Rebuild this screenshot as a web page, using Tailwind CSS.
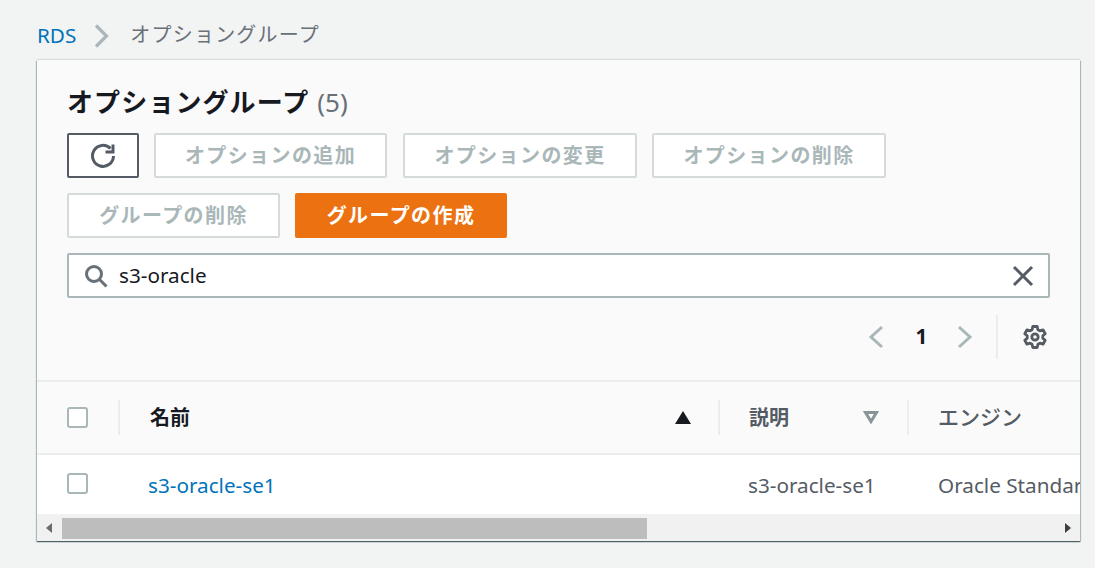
<!DOCTYPE html>
<html lang="ja">
<head>
  <meta charset="UTF-8" />
  <title>オプショングループ</title>
  <script src="https://cdn.jsdelivr.net/npm/@tailwindcss/browser@4"></script>
</head>
<body class="bg-[#f2f3f3] h-[568px] overflow-hidden font-['Noto_Sans','Noto_Sans_CJK_JP',sans-serif] text-[20.7px]">
  <!-- breadcrumb -->
  <nav class="h-[60px] pl-[37px] pt-[19px] flex items-start leading-[32px]">
    <a class="text-[#0073bb]">RDS</a>
    <svg class="w-[16px] h-[24px] ml-[18px] mt-[5px]" viewBox="0 0 16 24" fill="none" stroke="#aab7b8" stroke-width="3.200"><path d="M2 1.500l10.500 10.500L2 22.500" /></svg>
    <span class="ml-[20px] text-[#687078] text-[20px] tracking-[1.2px]">オプショングループ</span>
  </nav>

  <main class="ml-[37px] w-[1043px] h-[481px] bg-[#fafafa] shadow-[0_1px_1px_0_rgba(0,28,36,0.5),1px_1px_1px_0_rgba(0,28,36,0.2),-1px_1px_1px_0_rgba(0,28,36,0.2),0_-1px_1px_0_rgba(0,28,36,0.1)] overflow-hidden flex flex-col">
    <div class="h-[322px] shrink-0 px-[30px] pt-[22px] border-b-2 border-[#eaeded]">
      <h1 class="h-[40px] leading-[40px] text-[#16191f] text-[26px] font-bold tracking-[1.1px]">オプショングループ <span class="font-normal text-[#687078] text-[26px] tracking-normal">(5)</span></h1>

      <div class="mt-[11px] flex font-bold text-[20px]">
        <button class="w-[72px] h-[45px] bg-white border-2 border-[#545b64] rounded-[2px] flex items-center justify-center">
          <svg class="w-[26px] h-[26px]" viewBox="0 0 26 26" fill="none" stroke="#545b64" stroke-width="3"><path d="M20.500 5.500A10.500 10.500 0 1 0 23.500 13" /><path d="M23 1.500V9h-7.500" /></svg>
        </button>
        <button class="ml-[15px] w-[233px] h-[45px] bg-white border-2 border-[#d5dbdb] rounded-[2px] text-[#aab7b8] tracking-[1.4px]">オプションの追加</button>
        <button class="ml-[16px] w-[234px] h-[45px] bg-white border-2 border-[#d5dbdb] rounded-[2px] text-[#aab7b8] tracking-[1.4px]">オプションの変更</button>
        <button class="ml-[15px] w-[234px] h-[45px] bg-white border-2 border-[#d5dbdb] rounded-[2px] text-[#aab7b8] tracking-[1.4px]">オプションの削除</button>
      </div>
      <div class="mt-[15px] flex gap-[15px] font-bold text-[20px]">
        <button class="w-[213px] h-[45px] bg-white border-2 border-[#d5dbdb] rounded-[2px] text-[#aab7b8] tracking-[1.4px]">グループの削除</button>
        <button class="w-[212px] h-[45px] bg-[#ec7211] rounded-[2px] text-white tracking-[1.4px]">グループの作成</button>
      </div>

      <div class="mt-[15px] w-[983px] h-[45px] bg-white border-2 border-[#aab7b8] rounded-[2px] flex items-center pl-[15px] pr-[14px]">
        <svg class="w-[24px] h-[24px]" viewBox="0 0 24 24" fill="none" stroke="#687078" stroke-width="3"><circle cx="10" cy="10" r="7.500" /><path d="M15.500 15.500L22.500 22.500" /></svg>
        <span class="ml-[11px] flex-1 text-[#16191f]">s3-oracle</span>
        <svg class="w-[22px] h-[22px]" viewBox="0 0 22 22" fill="none" stroke="#545b64" stroke-width="3"><path d="M2 2l18 18M20 2L2 20" /></svg>
      </div>

      <div class="mt-[17px] w-[983px] h-[44px] flex items-center justify-end">
        <svg class="w-[16px] h-[24px]" viewBox="0 0 16 24" fill="none" stroke="#aab7b8" stroke-width="3"><path d="M14 2L3 12l11 10" /></svg>
        <span class="w-[73px] pl-[2px] text-center text-[#16191f] font-bold">1</span>
        <svg class="w-[16px] h-[24px]" viewBox="0 0 16 24" fill="none" stroke="#aab7b8" stroke-width="3"><path d="M2 2l11 10L2 22" /></svg>
        <div class="w-[2px] h-[44px] bg-[#eaeded] ml-[23px]"></div>
        <svg class="ml-[25px] mr-[3px] w-[24px] h-[24px]" viewBox="0 0 24 24" fill="none" stroke="#545b64" stroke-width="2.800" stroke-linejoin="round"><path d="M9.800 1.500h4.400l.7 3.200 2 1.100 3.100-1 2.200 3.800-2.400 2.200v2.400l2.400 2.200-2.200 3.800-3.100-1-2 1.100-.7 3.200H9.800l-.7-3.200-2-1.100-3.100 1-2.200-3.800 2.400-2.200v-2.400L1.800 8.600 4 4.800l3.100 1 2-1.100z" /><circle cx="12" cy="12" r="3.200" /></svg>
      </div>
    </div>

    <!-- table head -->
    <div class="h-[73px] shrink-0 flex items-center border-b-2 border-[#eaeded] font-bold text-[20px]">
      <span class="shrink-0 ml-[30px] w-[21px] h-[21px] bg-white border-2 border-[#aab7b8] rounded-[3px]"></span>
      <span class="shrink-0 ml-[30px] w-[2px] h-[35px] bg-[#eaeded]"></span>
      <span class="shrink-0 ml-[30px] w-[525px] text-[#16191f]">名前</span>
      <svg class="shrink-0 w-[16px] h-[13px]" viewBox="0 0 16 13" fill="#16191f"><path d="M8 0l8 13H0z" /></svg>
      <span class="shrink-0 ml-[27px] w-[2px] h-[35px] bg-[#eaeded]"></span>
      <span class="shrink-0 ml-[29px] w-[114px] text-[#545b64]">説明</span>
      <svg class="shrink-0 w-[16px] h-[13px]" viewBox="0 0 16 13" fill="none" stroke="#879596" stroke-width="3"><path d="M2.500 1.500h11L8 10.500z" /></svg>
      <span class="shrink-0 ml-[28px] w-[2px] h-[35px] bg-[#eaeded]"></span>
      <span class="shrink-0 ml-[29px] text-[#545b64] font-medium text-[21px]">エンジン</span>
    </div>

    <!-- table row -->
    <div class="h-[59px] shrink-0 bg-white flex items-center whitespace-nowrap overflow-hidden">
      <span class="shrink-0 ml-[30px] w-[21px] h-[21px] bg-white border-2 border-[#aab7b8] rounded-[3px] -mt-[2px]"></span>
      <a class="shrink-0 ml-[60px] w-[600px] text-[#0073bb] mt-[3px]">s3-oracle-se1</a>
      <span class="shrink-0 w-[190px] text-[#545b64] mt-[3px]">s3-oracle-se1</span>
      <span class="shrink-0 text-[#545b64] mt-[3px]">Oracle Standard Edition</span>
    </div>

    <!-- horizontal scrollbar -->
    <div class="h-[27px] shrink-0 bg-[#f1f1f1] flex items-center">
      <svg class="ml-[9px] w-[6px] h-[10px]" viewBox="0 0 6 10" fill="#6b6b6b"><path d="M6 0v10L0 5z" /></svg>
      <div class="ml-[10px] mt-[2px] w-[585px] h-[21px] bg-[#bdbdbd]"></div>
      <svg class="ml-auto mr-[9px] w-[6px] h-[10px]" viewBox="0 0 6 10" fill="#3f3f3f"><path d="M0 0v10l6-5z" /></svg>
    </div>
  </main>
</body>
</html>
